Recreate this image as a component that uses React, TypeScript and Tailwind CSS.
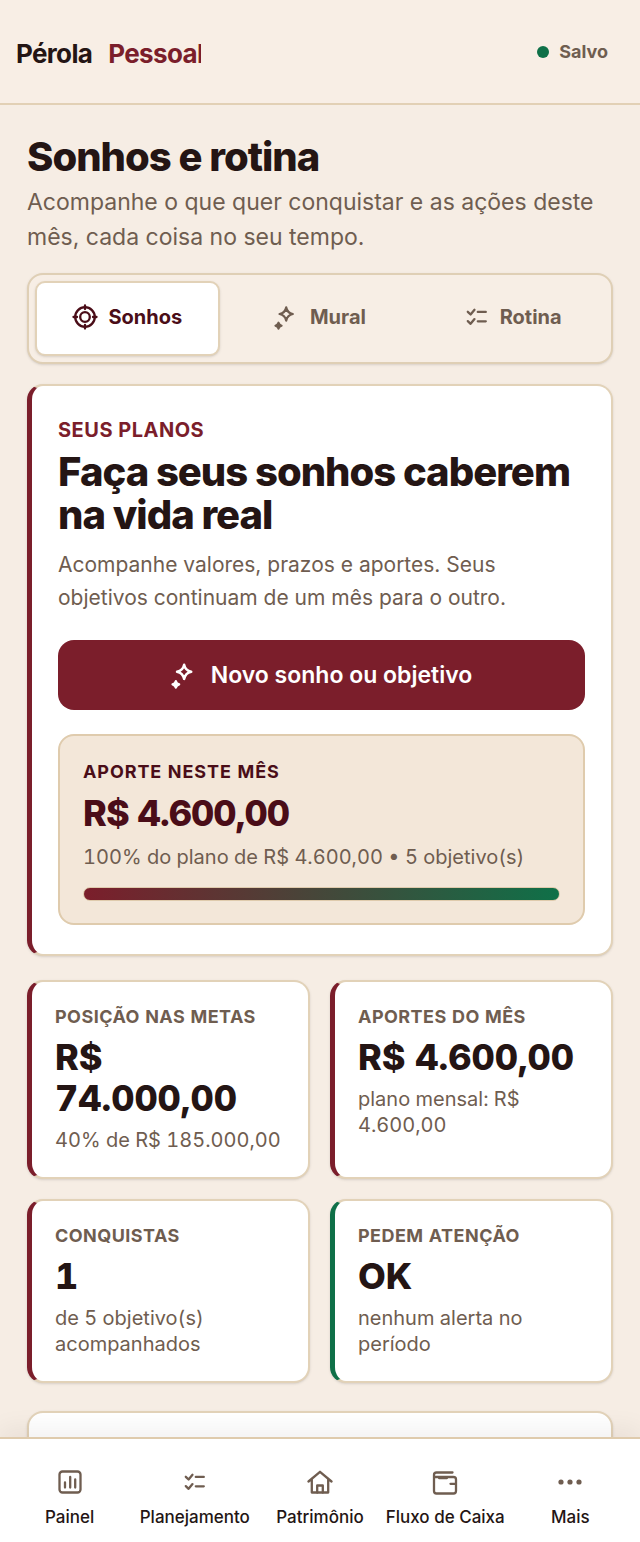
import type { ReactNode } from 'react';
import clsx from 'clsx';

type IconProps = { className?: string };

function Icon({ className, children }: IconProps & { children: ReactNode }) {
  return (
    <svg
      viewBox="0 0 26 26"
      fill="none"
      stroke="currentColor"
      strokeWidth="2.3"
      strokeLinecap="round"
      strokeLinejoin="round"
      aria-hidden="true"
      className={clsx('shrink-0', className)}
    >
      {children}
    </svg>
  );
}

function TargetIcon({ className }: IconProps) {
  return (
    <Icon className={className}>
      <circle cx="13" cy="13" r="9.8" />
      <circle cx="13" cy="13" r="4.8" />
      <path d="M13 1.500v3.500M13 21v3.500M1.500 13H5M21 13h3.500" />
    </Icon>
  );
}

function SparkleIcon({ className }: IconProps) {
  return (
    <Icon className={className}>
      <path d="M12.200 3.400c.8 3.900 2.500 5.700 6.600 6.600-4.100.9-5.800 2.700-6.600 6.600-.8-3.900-2.500-5.700-6.600-6.600 4.100-.9 5.800-2.700 6.600-6.600Z" />
      <path d="M4.500 18.600c.5 1.900 1.200 2.600 3.100 3.100-1.900.5-2.600 1.200-3.100 3.100-.5-1.900-1.200-2.600-3.100-3.100 1.900-.5 2.600-1.200 3.100-3.100Z" fill="currentColor" strokeWidth="2" />
    </Icon>
  );
}

function ChecklistIcon({ className }: IconProps) {
  return (
    <Icon className={className}>
      <path d="m3.800 7.800 2.800 2.700 3.900-4.700M3.800 17.100l2.800 2.700 3.900-4.700M13.800 7.900h8M13.800 17.300h8" />
    </Icon>
  );
}

function PanelIcon({ className }: IconProps) {
  return (
    <Icon className={className}>
      <rect x="2.500" y="2.500" width="21" height="21" rx="3" />
      <path d="M8 13.500v5M13.200 8v10.500M18.200 10.500v8" />
    </Icon>
  );
}

function HomeIcon({ className }: IconProps) {
  return (
    <Icon className={className}>
      <path d="M1.500 12.500 13 2.800l11.500 9.700M4.800 10.500v13h16.400v-13" />
      <path d="M10.200 23.500v-7h5.600v7" />
    </Icon>
  );
}

function WalletIcon({ className }: IconProps) {
  return (
    <Icon className={className}>
      <path d="M20.500 3.500H4.500a2.500 2.500 0 0 0-2.500 2.500v16a2.500 2.500 0 0 0 2.500 2.500h17a2.500 2.500 0 0 0 2.500-2.500V10.500a2.500 2.500 0 0 0-2.500-2.500H2.500M7 9h8M24 14.800h-5.500" />
    </Icon>
  );
}

function DotsIcon({ className }: IconProps) {
  return (
    <Icon className={className}>
      <g fill="currentColor" stroke="none">
        <circle cx="4" cy="13" r="2.600" />
        <circle cx="13" cy="13" r="2.600" />
        <circle cx="22" cy="13" r="2.600" />
      </g>
    </Icon>
  );
}

const tabs = [
  { label: 'Sonhos', icon: TargetIcon, active: true },
  { label: 'Mural', icon: SparkleIcon, active: false },
  { label: 'Rotina', icon: ChecklistIcon, active: false },
];

const stats = [
  { label: 'Posição nas metas', value: 'R$ 74.000,00', detail: '40% de R$ 185.000,00', ok: false },
  { label: 'Aportes do mês', value: 'R$ 4.600,00', detail: 'plano mensal: R$ 4.600,00', ok: false },
  { label: 'Conquistas', value: '1', detail: 'de 5 objetivo(s) acompanhados', ok: false },
  { label: 'Pedem atenção', value: 'OK', detail: 'nenhum alerta no período', ok: true },
];

const navItems = [
  { label: 'Painel', icon: PanelIcon },
  { label: 'Planejamento', icon: ChecklistIcon },
  { label: 'Patrimônio', icon: HomeIcon },
  { label: 'Fluxo de Caixa', icon: WalletIcon },
  { label: 'Mais', icon: DotsIcon },
];

function Header() {
  return (
    <header className="flex h-[105px] shrink-0 items-center justify-between border-b-2 border-[#e2d0b5] bg-[#f8eee5] pr-8 pl-4">
      <div className="flex w-[185px] gap-4 overflow-hidden pt-1 text-[26px] font-bold tracking-tight whitespace-nowrap">
        <span>Pérola</span>
        <span className="text-[#7b1e2b]">Pessoal</span>
      </div>
      <div className="flex items-center gap-2.5 text-lg font-bold text-[#6f5d50]">
        <span className="size-3 rounded-full bg-[#0f7048]" />
        Salvo
      </div>
    </header>
  );
}

function Tabs() {
  return (
    <div role="tablist" className="mt-[18px] grid grid-cols-3 gap-2 rounded-2xl border-2 border-[#dfcfb5] bg-[#f7eee5] p-1.5 shadow-sm">
      {tabs.map(({ label, icon: TabIcon, active }) => (
        <button
          key={label}
          type="button"
          role="tab"
          aria-selected={active}
          className={clsx(
            'flex h-[75px] items-center justify-center gap-2.5 rounded-[10px] pb-1 text-xl font-bold',
            active ? 'border-2 border-[#e2d2b8] bg-white text-[#4a0d18] shadow-sm' : 'text-[#6f5d50]',
          )}
        >
          <TabIcon className="size-[26px]" />
          {label}
        </button>
      ))}
    </div>
  );
}

function PlansCard() {
  return (
    <section className="mt-5 rounded-2xl border-2 border-l-5 border-[#e2d2b8] border-l-[#7b1e2b] bg-white px-[26px] pt-7 pb-[29px] shadow-sm">
      <div className="text-xl leading-8 font-bold tracking-wide text-[#7b1e2b] uppercase">Seus planos</div>
      <h2 className="mt-1 text-[40px] leading-[43px] font-extrabold tracking-tight">
        Faça seus sonhos caberem na vida real
      </h2>
      <p className="mt-3 text-[21px] leading-[33px] text-[#6f5d50]">
        Acompanhe valores, prazos e aportes. Seus objetivos continuam de um mês para o outro.
      </p>
      <button
        type="button"
        className="mt-[26px] flex h-[70px] w-full items-center justify-center gap-3 rounded-2xl bg-[#7b1e2b] text-[23px] font-semibold text-white"
      >
        <SparkleIcon className="size-7" />
        Novo sonho ou objetivo
      </button>

      <div className="mt-6 rounded-2xl border-2 border-[#dfcbad] bg-[#f3e7d9] px-[23px] py-[22px] tabular-nums">
        <div className="text-lg leading-7 font-bold tracking-wider text-[#4a0d18] uppercase">Aporte neste mês</div>
        <div className="mt-1 text-4xl leading-[47px] font-extrabold tracking-tight text-[#4a0d18]">R$ 4.600,00</div>
        <div className="mt-1 text-xl leading-8 text-[#6f5d50]">100% do plano de R$ 4.600,00 • 5 objetivo(s)</div>
        <div className="mt-3.5 h-3.5 rounded-full border border-[#dfcbad] bg-linear-to-r/srgb from-[#7b1e2b] to-[#0f7048]" />
      </div>
    </section>
  );
}

function StatCard({ label, value, detail, ok }: (typeof stats)[number]) {
  return (
    <article
      className={clsx(
        'rounded-2xl border-2 border-l-5 border-[#e2d2b8] bg-white px-[23px] pt-[21px] pb-6 tabular-nums shadow-sm',
        ok ? 'border-l-[#0f7048]' : 'border-l-[#7b1e2b]',
      )}
    >
      <div className="text-lg leading-7 font-bold tracking-wide text-[#6f5d50] uppercase">{label}</div>
      <div className="mt-1.5 text-4xl leading-[41px] font-extrabold">{value}</div>
      <div className="mt-2 text-xl leading-[26px] text-[#6f5d50]">{detail}</div>
    </article>
  );
}

function BottomNav() {
  return (
    <nav className="relative grid h-[105px] shrink-0 grid-cols-5 border-t-2 border-[#dfcbad] bg-white px-[7px] shadow-[0_-8px_24px_rgba(40,20,20,0.06)]">
      {navItems.map(({ label, icon: NavIcon }) => (
        <a key={label} href="#" className="flex flex-col items-center pt-[30px] text-[17px] leading-6 font-medium whitespace-nowrap">
          <NavIcon className="size-[26px] text-[#6f5d50]" />
          <span className="mt-2.5">{label}</span>
        </a>
      ))}
    </nav>
  );
}

export default function App() {
  return (
    <div className="flex h-screen flex-col bg-[#f6ede4] font-['Inter',sans-serif] text-[#241514]">
      <Header />
      <main className="min-h-0 flex-1 overflow-y-auto px-[27px] pt-7 [scrollbar-width:none]">
        <h1 className="text-[40px] leading-[48px] font-extrabold tracking-tight">Sonhos e rotina</h1>
        <p className="mt-1 text-[23px] leading-[35px] text-[#6f5d50]">
          Acompanhe o que quer conquistar e as ações deste mês, cada coisa no seu tempo.
        </p>
        <Tabs />
        <PlansCard />
        <div className="mt-6 grid grid-cols-2 gap-5">
          {stats.map((stat) => (
            <StatCard key={stat.label} {...stat} />
          ))}
        </div>
        <section className="mt-7 h-40 rounded-2xl border-2 border-[#e2d2b8] bg-white shadow-sm" />
      </main>
      <BottomNav />
    </div>
  );
}
